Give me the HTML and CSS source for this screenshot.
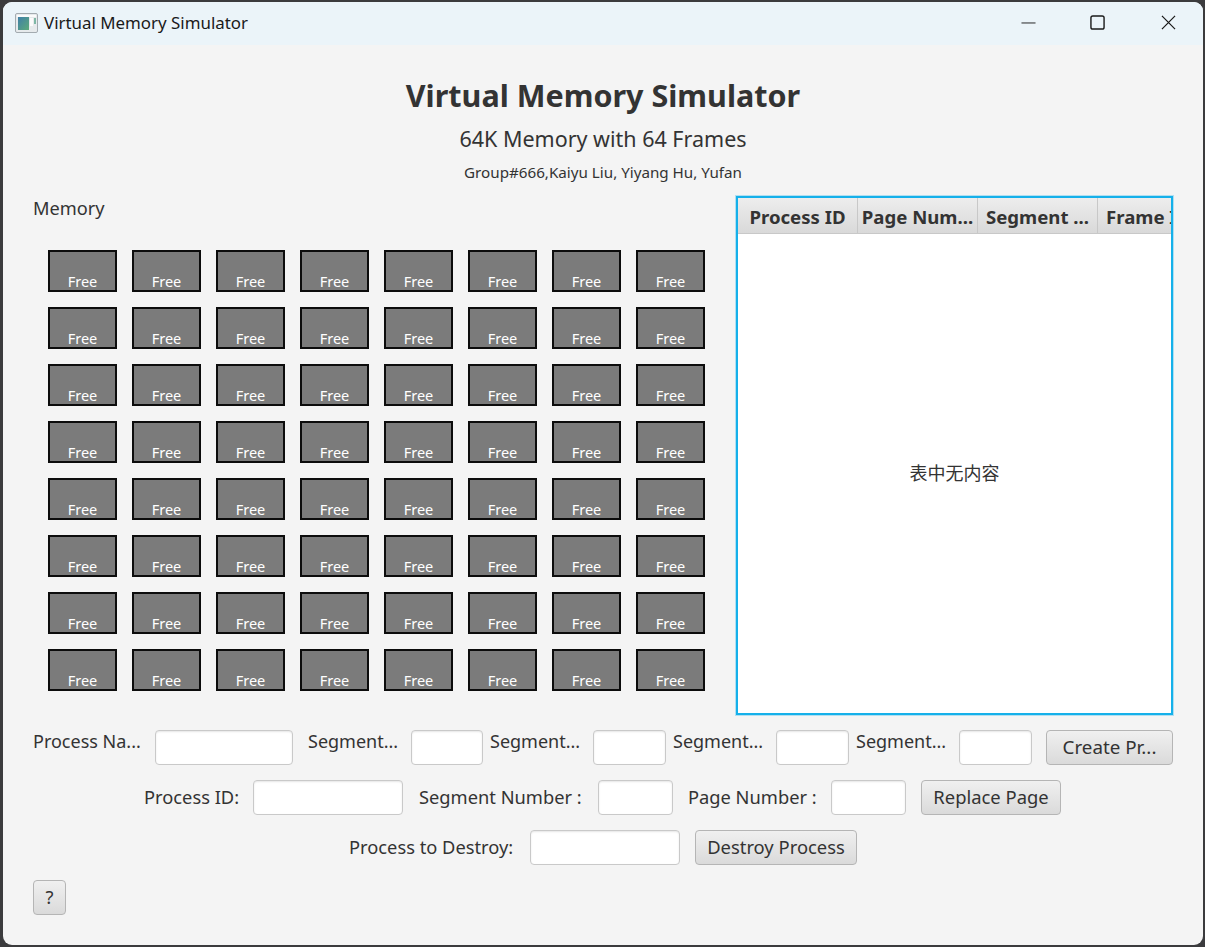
FILE: index.html
```html
<!DOCTYPE html>
<html lang="en">

<head>
    <meta charset="UTF-8">
    <meta name="viewport" content="width=device-width, initial-scale=1.0">
    <title>Virtual Memory Simulator</title>
    <link rel="stylesheet" href="styles.css">
</head>

<body>
    <div class="window">
        <div class="titlebar">
            <svg class="app-icon" width="23" height="20" viewBox="0 0 23 20">
                <defs>
                    <linearGradient id="pane" x1="0" y1="0" x2="1" y2="1">
                        <stop offset="0" stop-color="#3f7fa8" />
                        <stop offset="1" stop-color="#5cab7a" />
                    </linearGradient>
                </defs>
                <rect x="0.5" y="0.5" width="22" height="19" rx="1.5" fill="#e6eaec" stroke="#a3abb0" />
                <rect x="2" y="2" width="19" height="2" fill="#fbfbfb" />
                <rect x="3" y="4" width="11" height="13" fill="url(#pane)" />
                <rect x="15" y="5" width="3" height="8" fill="#fbfbfb" />
                <rect x="19" y="5" width="2" height="6" fill="#7fb8a6" />
            </svg>
            <span class="window-title">Virtual Memory Simulator</span>
            <div class="window-buttons">
                <svg class="win-btn" width="15" height="15" viewBox="0 0 16 16">
                    <path d="M0.5 8.5H15.5" stroke="#1a1a1a" stroke-width="1" fill="none" />
                </svg>
                <svg class="win-btn" width="15" height="15" viewBox="0 0 16 16">
                    <rect x="1" y="1" width="14" height="14" rx="2" stroke="#1a1a1a" stroke-width="1.5" fill="none" />
                </svg>
                <svg class="win-btn win-close" width="15" height="15" viewBox="0 0 16 16">
                    <path d="M1 1L15 15M15 1L1 15" stroke="#1a1a1a" stroke-width="1.3" fill="none" />
                </svg>
            </div>
        </div>

        <div class="content">
            <h1 class="main-title">Virtual Memory Simulator</h1>
            <h2 class="sub-title">64K Memory with 64 Frames</h2>
            <p class="group-line">Group#666,Kaiyu Liu, Yiyang Hu, Yufan</p>

            <div class="panels">
                <div class="memory-panel">
                    <div class="memory-label">Memory</div>
                    <div class="frame-grid" id="frames"></div>
                </div>

                <div class="table-panel">
                    <div class="table-header">
                        <div class="col-head">Process ID</div>
                        <div class="col-head">Page Num...</div>
                        <div class="col-head">Segment ...</div>
                        <div class="col-head col-clip">Frame ID</div>
                    </div>
                    <div class="table-empty">表中无内容</div>
                </div>
            </div>

            <div class="form-row row-create">
                <span class="field-label label-top name-label">Process Na...</span>
                <input type="text" class="field name-field">
                <span class="field-label label-top seg-label first-seg">Segment...</span>
                <input type="text" class="field seg-field first-seg-field">
                <span class="field-label label-top seg-label">Segment...</span>
                <input type="text" class="field seg-field">
                <span class="field-label label-top seg-label">Segment...</span>
                <input type="text" class="field seg-field">
                <span class="field-label label-top seg-label">Segment...</span>
                <input type="text" class="field seg-field">
                <button class="btn create-btn">Create Pr...</button>
            </div>

            <div class="form-row row-center row-replace">
                <span class="field-label id-label">Process ID:</span>
                <input type="text" class="field wide-field">
                <span class="field-label segno-label">Segment Number :</span>
                <input type="text" class="field small-field">
                <span class="field-label pageno-label">Page Number :</span>
                <input type="text" class="field small-field">
                <button class="btn replace-btn">Replace Page</button>
            </div>

            <div class="form-row row-center">
                <span class="field-label destroy-label">Process to Destroy:</span>
                <input type="text" class="field wide-field">
                <button class="btn destroy-btn">Destroy Process</button>
            </div>

            <button class="btn help-btn">?</button>
        </div>
    </div>

    <script>
        // Fill the memory grid, 8 x 8 frames
        const frames = document.getElementById("frames");
        for (let i = 0; i < 64; i++) {
            const frame = document.createElement("div");
            frame.className = "frame";
            frame.innerText = "Free";
            frames.appendChild(frame);
        }
    </script>
</body>

</html>
```

FILE: styles.css
```css
* {
    box-sizing: border-box;
}

html,
body {
    margin: 0;
    height: 100%;
}

body {
    background-color: #3b3b3d;
    padding: 2px 2px 2px 3px;
    font-family: "Noto Sans", "Open Sans", sans-serif;
    color: #333;
    overflow: hidden;
}

.window {
    height: 100%;
    background-color: #f4f4f4;
    border-radius: 9px;
    overflow: hidden;
}

.titlebar {
    height: 43px;
    display: flex;
    align-items: center;
    padding-left: 12px;
    padding-bottom: 2px;
    background-color: #ebf4f9;
    color: #1a1a1a;
}

.app-icon {
    margin-right: 6px;
}

.window-title {
    font-size: 16.9px;
}

.window-buttons {
    margin-left: auto;
    display: flex;
    gap: 54px;
    padding-right: 27px;
}

.win-close {
    margin-left: 2px;
}

.content {
    padding: 0 30px;
}

.main-title {
    margin: 28px 0 0;
    height: 44px;
    line-height: 44px;
    font-size: 30.5px;
    font-weight: 700;
    text-align: center;
}

.sub-title {
    margin: 7px 0 0;
    height: 30px;
    line-height: 30px;
    font-size: 21.5px;
    font-weight: 400;
    text-align: center;
}

.group-line {
    margin: 7px 0 0;
    height: 22px;
    line-height: 22px;
    font-size: 15.2px;
    text-align: center;
}

.panels {
    display: flex;
    justify-content: space-between;
    margin-top: 13px;
    height: 519px;
}

.memory-label {
    font-size: 18.2px;
    line-height: 24px;
}

.frame-grid {
    display: grid;
    grid-template-columns: repeat(8, 69px);
    grid-auto-rows: 42px;
    gap: 15px;
    margin: 30px 0 0 15px;
}

.frame {
    background-color: #7b7b7b;
    border: 2px solid #0c0c0c;
    color: #fff;
    font-size: 14.5px;
    line-height: 18px;
    text-align: center;
    padding-top: 20px;
}

.table-panel {
    width: 437px;
    border: 2px solid #15b0ea;
    box-shadow: 0 0 0 1px rgba(21, 176, 234, 0.3);
    background: white;
    display: flex;
    flex-direction: column;
}

.table-header {
    display: flex;
    height: 36px;
    overflow: hidden;
    flex-shrink: 0;
    border-bottom: 1px solid #c8c8c8;
}

.col-head {
    width: 120px;
    flex-shrink: 0;
    background: linear-gradient(#ededed, #d9d9d9);
    border-right: 1px solid #c8c8c8;
    font-size: 18.6px;
    font-weight: 700;
    line-height: 37px;
    text-align: center;
    white-space: nowrap;
}

.col-clip {
    text-align: left;
    padding-left: 8px;
}

.table-empty {
    flex: 1;
    display: flex;
    align-items: center;
    justify-content: center;
    font-family: "Noto Sans CJK SC", sans-serif;
    font-size: 18px;
    color: #333;
    padding-bottom: 4px;
}

.form-row {
    display: flex;
    align-items: center;
    height: 35px;
}

.row-create {
    margin-top: 15px;
}

.row-center {
    margin-top: 15px;
    justify-content: center;
    gap: 15px;
}

.row-replace {
    padding-right: 1px;
}

.field-label {
    font-size: 18.3px;
    line-height: 24px;
    white-space: nowrap;
    padding-bottom: 2px;
}

.label-top {
    align-self: flex-start;
    margin-top: -1px;
    font-size: 18px;
}

.name-label {
    width: 122px;
}

.seg-label {
    width: 103px;
    margin-left: 7px;
}

.first-seg {
    margin-left: 15px;
}

.id-label {
    width: 94px;
}

.segno-label {
    width: 164px;
    margin-left: 1px;
}

.pageno-label {
    width: 128px;
}

.destroy-label {
    width: 166px;
}

.field {
    height: 35px;
    background: white;
    border: 1px solid #c9c9c9;
    border-radius: 4px;
    box-shadow: inset 0 1px 2px rgba(0, 0, 0, 0.1);
    outline: none;
    padding: 0 8px;
}

.name-field {
    width: 138px;
}

.seg-field {
    width: 73px;
}

.first-seg-field {
    width: 72px;
}

.wide-field {
    width: 150px;
}

.small-field {
    width: 75px;
}

.btn {
    height: 35px;
    padding: 0 0 2px;
    background: linear-gradient(#f0f0f0, #dadada);
    border: 1px solid #b5b5b5;
    border-radius: 4px;
    color: #333;
    font-family: inherit;
    font-size: 18.4px;
    white-space: nowrap;
}

.create-btn {
    width: 127px;
    margin-left: 14px;
    font-size: 18.8px;
}

.replace-btn {
    width: 140px;
}

.destroy-btn {
    width: 162px;
}

.help-btn {
    display: block;
    width: 33px;
    margin-top: 15px;
}
```
